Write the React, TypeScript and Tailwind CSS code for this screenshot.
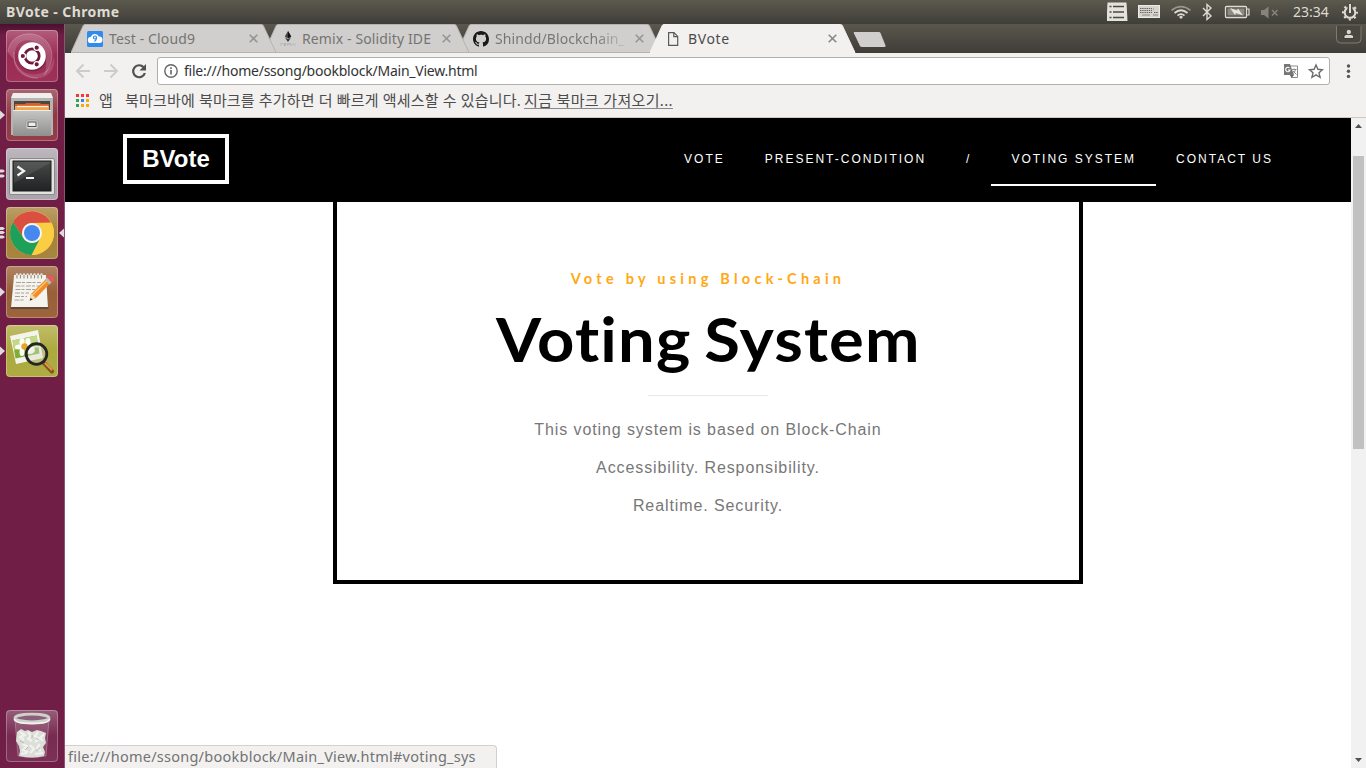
import React from "react";

const ui = "font-['Noto_Sans','Noto_Sans_CJK_KR',sans-serif]";

/* ---------- top panel ---------- */

function PanelIcons() {
  return (
    <svg width="259" height="24" viewBox="1107 0 259 24" className="block shrink-0">
      <path d="M1107.500 2.500h19l1 18.500h-21z" fill="#e4e2dc" />
      <path d="M1113 6.500h11M1113 12h11M1113 17.500h11" stroke="#4b4943" strokeWidth="1.600" />
      <path d="M1109.500 6.500h2M1109.500 12h2M1109.500 17.500h2" stroke="#4b4943" strokeWidth="1.600" />
      <rect x="1138.500" y="5.500" width="21" height="12" fill="#d5d3cd" stroke="#eceae5" />
      <path d="M1140 8.500h12M1140 10.500h12M1140 12.500h12M1154 12.500h4" stroke="#63615a" strokeDasharray="1.400 .8" />
      <path d="M1142 15h8M1153 9h1M1153 15h5" stroke="#8a887f" />
      <g fill="none" stroke="#dfdbd2" strokeWidth="1.700">
        <path d="M1171.500 10.300Q1181 3 1190.500 10.300" stroke="#99968d" />
        <path d="M1174.500 13Q1181 7.500 1187.500 13" />
        <path d="M1177.500 15.700Q1181 12.500 1184.500 15.700" />
      </g>
      <path d="M1179 17l2-1.500 2 1.500-2 2z" fill="#dfdbd2" />
      <path d="M1203 8l8 8-4 3.500v-15l4 3.500-8 8" fill="none" stroke="#dfdbd2" strokeWidth="1.400" />
      <rect x="1225.500" y="6.500" width="21" height="11" rx="1" fill="none" stroke="#dfdbd2" strokeWidth="1.300" />
      <rect x="1227.500" y="8.500" width="17" height="7" fill="#8d8a82" />
      <path d="M1247 9h2v6h-2" fill="none" stroke="#dfdbd2" strokeWidth="1.200" />
      <path d="M1230 8l7 2.500 1-2 5 7-7-2.500-1 2z" fill="#e6e3dc" />
      <path d="M1261 10h3l4.500-3.500v12l-4.500-3.500h-3z" fill="#86837a" />
      <path d="M1272 10l5.500 5.500M1277.500 10l-5.500 5.500" stroke="#86837a" strokeWidth="1.500" />
      <g stroke="#dfdbd2" fill="none">
        <circle cx="1350" cy="12.500" r="5.300" strokeWidth="2" />
        <circle cx="1350" cy="12.500" r="7" strokeWidth="2" strokeDasharray="2.200 3.298" strokeDashoffset="1" />
        <path d="M1350 3.500v9" stroke="#4b4943" strokeWidth="5" />
        <path d="M1350 4v9" strokeWidth="2" />
      </g>
    </svg>
  );
}

function TopPanel() {
  return (
    <div className={`flex h-6 w-full shrink-0 items-center overflow-hidden bg-linear-to-b from-[#5c594e] to-[#3f3e39] ${ui}`}>
      <span className="w-[240px] pl-[6px] text-[14px] leading-6 font-bold tracking-[0.4px] whitespace-nowrap text-[#dfdbd2]">BVote - Chrome</span>
      <div className="relative ml-auto h-6 w-[259px]">
        <PanelIcons />
        <span className="absolute top-0 left-[186px] text-[14px] leading-6 text-[#dfdbd2]">23:34</span>
      </div>
    </div>
  );
}

/* ---------- launcher ---------- */

function Tile({ color, marks = 0, active = false, children }: { color: string; marks?: number; active?: boolean; children: React.ReactNode }) {
  return (
    <div className="flex h-[52px] w-16 shrink-0 items-center">
      <svg width="64" height="52" viewBox="0 0 64 52" className="block">
        <rect x="6" width="52" height="52" rx="4" fill={color} />
        <rect x="6" width="52" height="52" rx="4" fill="url(#gloss)" />
        <rect x="6.500" y=".5" width="51" height="51" rx="3.500" fill="none" stroke="#fff" strokeOpacity=".28" />
        {marks === 1 && <path d="M0 21.500l5 4.500-5 4.500z" fill="#dedade" />}
        {marks === 2 && <path d="M0 21.500h3l2 1.500-2 1.500H0zM0 26.500h3l2 1.500-2 1.500H0z" fill="#dedade" />}
        {marks === 3 && <path d="M0 20h3l2 1.500-2 1.500H0zM0 24h3l2 1.500-2 1.500H0zM0 28.500h3l2 1.500-2 1.500H0z" fill="#dedade" />}
        {active && <path d="M64 21.500l-5 4.500 5 4.500z" fill="#dedade" />}
        {children}
      </svg>
    </div>
  );
}

function UbuntuMark() {
  return (
    <g>
      <path d="M8 22C9 7 27-1 41 7c14 8 14 26 3 38 5-13 1-28-9-33C24 7 13 12 15 30c-3-3-6-5-7-8z" fill="#fff" fillOpacity=".16" />
      <path d="M14 26c2 14 15 23 30 16 6-3 9-9 10-16 2 12-4 20-14 22-15 3-28-8-26-22z" fill="#fff" fillOpacity=".14" />
      <path d="M8 22C9 7 27-1 41 7c14 8 14 26 3 38M14 22c-2 14 9 26 24 26" fill="none" stroke="#fff" strokeOpacity=".22" />
      <circle cx="32.500" cy="27.300" r="14" fill="#000" fillOpacity=".25" />
      <circle cx="32" cy="26" r="13.800" fill="#fff" />
      <circle cx="32" cy="26" r="7.200" fill="none" stroke="#72183c" strokeWidth="2.800" />
      <g fill="#72183c" stroke="#fff" strokeWidth="1.200">
        <circle cx="22.800" cy="26" r="2.700" />
        <circle cx="36.700" cy="17.700" r="2.700" />
        <circle cx="36.700" cy="34.300" r="2.700" />
      </g>
    </g>
  );
}

function FilesIcon() {
  return (
    <g>
      <path d="M13 4h38l2 6v36H11V10z" fill="#b5b5b3" />
      <path d="M13 4h38l2 5H11z" fill="#efefed" />
      <path d="M14 12h36v10H14z" fill="#4a4744" />
      <path d="M15 15h10l1-1h14l1 1h8v7H15z" fill="#d95f29" />
      <path d="M15 17h34v5H15z" fill="#f3a54e" />
      <path d="M17 17.500h31" stroke="#fff3d9" strokeWidth="1.300" />
      <path d="M13 21h38v26H13z" fill="url(#steel)" />
      <path d="M13 21.500h38" stroke="#ededeb" />
      <rect x="26" y="31" width="12" height="9" rx="2" fill="#ddd" stroke="#a0a09e" />
      <rect x="28" y="33" width="8" height="4.500" fill="#eee" stroke="#4e4e4c" />
    </g>
  );
}

function TerminalIcon() {
  return (
    <g>
      <rect x="9.500" y="10.500" width="45" height="36" rx="1.500" fill="#e2e2df" stroke="#8b898b" />
      <rect x="13" y="13" width="38" height="30" fill="url(#screen)" stroke="#1d1f1f" />
      <path d="M14 14h36v1L14 35z" fill="#fff" fillOpacity=".09" />
      <path d="M17.500 18.500l6.500 4.500-6.500 4.500" fill="none" stroke="#f4f4f2" strokeWidth="2.200" />
      <path d="M26 30h8" stroke="#f4f4f2" strokeWidth="2" />
    </g>
  );
}

function ChromeIcon() {
  return (
    <g>
      <circle cx="32" cy="26" r="22" fill="#f7cb4d" />
      <path d="M13 15A22 22 0 0 1 51 15.500L32 16a10 10 0 0 0-8.600 15z" fill="#db4f41" />
      <path d="M32 16h19.500a22 22 0 0 1-20 32l9.400-17.500A10 10 0 0 0 32 16z" fill="#fbcd43" />
      <path d="M13 15A22 22 0 0 0 31.500 48L39.500 32.600A10 10 0 0 1 23.400 31z" fill="#1ca05a" />
      <circle cx="32" cy="26" r="10" fill="#f4f5f4" />
      <circle cx="32" cy="26" r="8" fill="#4688ee" />
    </g>
  );
}

function EditorIcon() {
  return (
    <g>
      <path d="M14 10h32l2.500 33h-38z" fill="#5d4a38" />
      <path d="M14 9h32l2 32H11z" fill="#f4f3ee" />
      <path d="M17 11V8.500M20.500 11V8.500M24 11V8.500M27.500 11V8.500M31 11V8.500M34.500 11V8.500M38 11V8.500M41.500 11V8.500" stroke="#e8e8e5" strokeWidth="2.400" strokeLinecap="round" />
      <path d="M17 12.500V9M20.500 12.500V9M24 12.500V9M27.500 12.500V9M31 12.500V9M34.500 12.500V9M38 12.500V9M41.500 12.500V9" stroke="#8c857d" strokeWidth=".9" />
      <path d="M16 16.500h25M15.500 20h24M15.500 23.500h20M15 27h14M15 30.500h12M14.500 34h10" stroke="#a6a29a" strokeDasharray="5 1 3 1.500" />
      <path d="M31 28L48 11l4 4.500L36 32l-6 2.500z" fill="#ef8d29" />
      <path d="M32 29.500L49 12.500" stroke="#ffc36b" strokeWidth="1.500" />
      <path d="M31 28l5 4-6 2.500z" fill="#f1d9ae" />
      <path d="M30.600 32l2 1.500-3 1.300z" fill="#222" />
      <path d="M45 13.500l2-2 4.500 5-2 2z" fill="#b7bcc0" />
      <path d="M47 11.500q3-4 6-.5t-1.500 5.500z" fill="#e45b59" />
    </g>
  );
}

function ViewerIcon() {
  return (
    <g>
      <path d="M10 11l28-6 5 28-27 6z" fill="#f3f4ec" />
      <path d="M12.500 15.500l24-5 3 18-24 5z" fill="#7cae39" />
      <path d="M12.500 15.500l24-5 1.500 8L14 25z" fill="#c3d888" />
      <g fill="#fffef7">
        <ellipse cx="22" cy="17" rx="2.500" ry="4" />
        <ellipse cx="28" cy="17" rx="2.500" ry="4" />
        <ellipse cx="19" cy="22" rx="4" ry="2.500" />
        <ellipse cx="22" cy="27" rx="2.500" ry="4" />
        <ellipse cx="30" cy="25" rx="5" ry="4" />
      </g>
      <circle cx="24.500" cy="21.500" r="3.200" fill="#e7a425" />
      <path d="M44 38l8 8.500" stroke="#8a541c" strokeWidth="4.200" strokeLinecap="round" />
      <path d="M45 38l7 7" stroke="#dc9c57" strokeWidth="1.800" />
      <circle cx="36.500" cy="29" r="10.300" fill="#d9dccb" fillOpacity=".42" stroke="#222724" strokeWidth="2.800" />
      <path d="M29 27q3-6 9-5" fill="none" stroke="#fff" strokeOpacity=".7" strokeWidth="1.500" />
    </g>
  );
}

function TrashIcon() {
  return (
    <g>
      <path d="M15 10h34l-3 36q-14 3-28 0z" fill="#fff" fillOpacity=".12" stroke="#fff" strokeOpacity=".25" />
      <path d="M17 22l4-3 4 2 3-1 4 2 5-2 4 1 5 2-1 5 1 5-3 4 2 5-1 4q-12 3-25 0l1-5-1-5-3-5z" fill="#dcded8" />
      <path d="M20 22l5 3-5 2 4 3M28 22l3 4-3 3 4 2M38 22l-3 4 4 3-4 3M44 24l-4 4 3 3M22 34l5 2-4 4 5 2M30 35l4 4-4 4M40 34l-3 4 4 3M21 44l6-1M35 44l8-1" fill="none" stroke="#f1f2ee" strokeWidth="2.200" strokeLinejoin="round" />
      <path d="M20 31l4 2M36 28l3 2M25 40l3-3M36 41l4-3M32 25v3" stroke="#b4b6b0" strokeWidth="1" />
      <ellipse cx="32" cy="8" rx="17" ry="3.800" fill="#8c6078" stroke="#cfd1cc" strokeWidth="2.800" />
      <path d="M14.500 9q0 4.500 17.500 4.500T49.500 9" fill="none" stroke="#f3f4f0" strokeWidth="1.800" />
    </g>
  );
}

function Launcher() {
  return (
    <aside className="flex w-[65px] shrink-0 flex-col justify-between border-r border-[#8d5478] bg-linear-to-b from-[#4a1030] via-[#701e45] via-[12px] to-[#701e45] pt-[6px] pb-[6px]">
      <svg width="0" height="0" className="absolute">
        <defs>
          <linearGradient id="gloss" x2="0" y2="1">
            <stop stopColor="#fff" stopOpacity=".25" />
            <stop offset=".5" stopColor="#fff" stopOpacity=".02" />
            <stop offset="1" stopColor="#fff" stopOpacity=".05" />
          </linearGradient>
          <linearGradient id="steel" x2="0" y2="1">
            <stop stopColor="#c6c6c4" />
            <stop offset="1" stopColor="#8f8f8d" />
          </linearGradient>
          <linearGradient id="screen" x2="0" y2="1">
            <stop stopColor="#464948" />
            <stop offset="1" stopColor="#202323" />
          </linearGradient>
        </defs>
      </svg>
      <div className="flex flex-col gap-[7px]">
        <Tile color="#99274f"><UbuntuMark /></Tile>
        <Tile color="#8f3441" marks={1}><FilesIcon /></Tile>
        <Tile color="#aaa0a9" marks={2}><TerminalIcon /></Tile>
        <Tile color="#a47f35" marks={3} active><ChromeIcon /></Tile>
        <Tile color="#985c33" marks={1}><EditorIcon /></Tile>
        <Tile color="#aaa739" marks={1}><ViewerIcon /></Tile>
      </div>
      <Tile color="#75264d"><TrashIcon /></Tile>
    </aside>
  );
}

/* ---------- browser tabs ---------- */

function CloudIcon() {
  return (
    <svg width="16" height="16" viewBox="0 0 16 16">
      <rect width="16" height="16" rx="1.500" fill="#2f8cec" />
      <path d="M4 12a3 3 0 0 1-.3-6A4.500 4.500 0 0 1 12 5.500 3.200 3.200 0 0 1 12.500 12z" fill="#fff" />
      <circle cx="8" cy="6.500" r="1.500" fill="none" stroke="#2f8cec" strokeWidth="1.200" />
      <path d="M9.500 6.500q0 2.500-2 4" fill="none" stroke="#2f8cec" strokeWidth="1.200" />
    </svg>
  );
}

function RemixIcon() {
  return (
    <svg width="16" height="16" viewBox="0 0 16 16">
      <path d="M8 0l3.200 5.500L8 7.500l-3.200-2z" fill="#444" />
      <path d="M8 0v7.500l3.200-2z" fill="#111" />
      <path d="M4.800 6.300L8 8.300l3.200-2L8 11z" fill="#333" />
      <path d="M1 14.500v-2h1.500M4 13.500h2M4 12.500h2v1M4 12.500v2h2M7.500 14.500v-2h3v2M9 12.500v2M12 12.500v2M13.500 12.500l2 2M15.500 12.500l-2 2" fill="none" stroke="#aaa" strokeWidth=".7" />
    </svg>
  );
}

function GithubIcon() {
  return (
    <svg width="16" height="16" viewBox="0 0 16 16">
      <path fill="#1b1918" d="M8 0C3.580 0 0 3.580 0 8c0 3.540 2.290 6.530 5.470 7.590.4.070.55-.17.55-.38 0-.19-.01-.82-.01-1.490-2.010.37-2.530-.49-2.690-.94-.09-.23-.48-.94-.82-1.130-.28-.15-.68-.52-.01-.53.63-.01 1.080.58 1.230.82.72 1.210 1.870.87 2.330.66.07-.52.28-.87.51-1.070-1.780-.2-3.640-.89-3.640-3.950 0-.87.31-1.590.82-2.150-.08-.2-.36-1.020.08-2.120 0 0 .67-.21 2.200.82.64-.18 1.320-.27 2-.27s1.360.09 2 .27c1.530-1.040 2.200-.82 2.200-.82.44 1.100.16 1.920.08 2.120.51.56.82 1.270.82 2.150 0 3.070-1.870 3.750-3.650 3.950.29.25.54.73.54 1.480 0 1.070-.01 1.930-.01 2.200 0 .21.15.46.55.38A8.010 8.010 0 0 0 16 8c0-4.420-3.580-8-8-8z" />
    </svg>
  );
}

function PageIcon() {
  return (
    <svg width="16" height="16" viewBox="0 0 16 16" fill="none" stroke="#5a5a5a" strokeWidth="1.200">
      <path d="M2.600 1.600h5.400l3.700 3.800v9H2.600zM7.800 1.600v4h4" />
    </svg>
  );
}

type TabProps = { icon: React.ReactNode; label: string; layer: string; text: string; active?: boolean };

function Tab({ icon, label, layer, text, active = false }: TabProps) {
  return (
    <div className={`relative flex h-[29px] w-[193px] shrink-0 items-center ${layer}`}>
      <svg width="206" height="29" viewBox="0 0 206 29" className="absolute top-0 left-0">
        <path d="M0 28.500L12 2q.6-1.500 2-1.500h176.500q1.500 0 2 1.500L205 28.500z" fill={active ? "#f2f1f0" : "#d0cfcd"} />
        <path d="M0 28.500L12 2q.6-1.500 2-1.500h176.500q1.500 0 2 1.500L205 28.500" fill="none" stroke={active ? "#f2f1f0" : "#b5b3b0"} strokeWidth="1" />
        <path d="M0 28.500h205" stroke={active ? "#f2f1f0" : "#b5b3b0"} />
      </svg>
      <div className="relative flex w-full items-center pl-[16px]">
        <span className="shrink-0">{icon}</span>
        <span className={`ml-[6px] w-[132px] shrink-0 text-[14px] leading-[28px] whitespace-nowrap ${text}`}>{label}</span>
        <svg width="9" height="9" viewBox="0 0 9 9" className="ml-[8px] shrink-0" stroke={active ? "#888" : "#969593"} strokeWidth="1.600">
          <path d="M.7.7l7.600 7.600M8.300.7L.7 8.300" />
        </svg>
      </div>
    </div>
  );
}

function TabStrip() {
  return (
    <div className="flex h-[29px] items-start overflow-hidden bg-linear-to-b from-[#5a574d] to-[#3f3d38] pl-[6px]">
      <Tab icon={<CloudIcon />} label="Test - Cloud9" layer="z-30" text="text-[#757472] tracking-[0.12px]" />
      <Tab icon={<RemixIcon />} label="Remix - Solidity IDE" layer="z-20" text="text-[#757472] tracking-[0.12px]" />
      <Tab icon={<GithubIcon />} label="Shindd/Blockchain_" layer="z-10" text="bg-linear-to-r from-[#757472] from-75% to-[#757472]/10 bg-clip-text text-transparent tracking-[0.1px]" />
      <Tab icon={<PageIcon />} label="BVote" layer="z-40" text="text-[#4c4c4c] tracking-[0.6px]" active />
      <svg width="34" height="29" viewBox="0 0 34 29" className="ml-[10px] shrink-0">
        <path d="M1 8h25q1 0 1.500 1L32.500 21.500q.3 1.500-1 1.500H9q-1.500 0-2-1L1 9.500q-.5-1.500 0-1.500z" fill="#d0cfcd" />
      </svg>
      <svg width="27" height="22" viewBox="0 0 27 22" className="mr-[4px] ml-auto shrink-0">
        <path d="M1.500 2v13q0 4 4 4h16.500q4 0 4-4V2" fill="#49473f" stroke="#7d7a70" />
        <path d="M9 14.500v-2q0-2 2.500-2h4.500q2.500 0 2.500 2v2z" fill="#d8d5cd" stroke="#2c2b27" strokeWidth=".8" />
        <circle cx="13.800" cy="8" r="2.700" fill="#d8d5cd" stroke="#2c2b27" strokeWidth=".8" />
      </svg>
    </div>
  );
}

/* ---------- toolbar and bookmarks ---------- */

function Toolbar() {
  return (
    <div className="flex h-[36px] items-center">
      <svg width="92" height="36" viewBox="65 53 92 36" className="shrink-0" fill="none">
        <path d="M90 71H77.500M83.500 64.500L77 71l6.500 6.500" stroke="#cdccca" strokeWidth="2" />
        <path d="M104 71h12.500M110.500 64.500L117 71l-6.500 6.500" stroke="#cdccca" strokeWidth="2" />
        <path d="M143.600 67.200A6 6 0 1 0 144.900 73" stroke="#505050" strokeWidth="2.200" />
        <path d="M146 64v6.500h-6.500z" fill="#505050" />
      </svg>
      <div className="flex h-7 w-[1173px] shrink-0 items-center rounded-[3px] border border-[#b0afad] bg-white">
        <svg width="14" height="14" viewBox="0 0 14 14" className="ml-[6px] shrink-0" fill="none" stroke="#666" strokeWidth="1.400">
          <circle cx="7" cy="7" r="6.200" />
          <path d="M7 6v4.500M7 3.300v1.600" strokeWidth="1.600" />
        </svg>
        <span className="ml-[6px] text-[14px] leading-[26px] tracking-[-0.23px] whitespace-nowrap text-[#333]">file:///home/ssong/bookblock/Main_View.html</span>
        <svg width="42" height="18" viewBox="1282 62 42 18" className="mr-[5px] ml-auto shrink-0">
          <path d="M1290 66h7.500v11.500h-6z" fill="#fff" stroke="#8b8b8b" />
          <path d="M1284 64h6l4 11h-10z" fill="#767676" />
          <path d="M1289.500 68a2.200 2.200 0 1 0 .5 2h-2" fill="none" stroke="#fff" strokeWidth="1.100" />
          <path d="M1291.500 69.500h5M1294 68.500v1M1292.500 74q2.500-1.500 3-4.500M1293 71l3.500 3.500" fill="none" stroke="#8b8b8b" />
          <path d="M1290 75l4 0-2.500 3z" fill="#666" />
          <path d="M1316 65l1.900 4.300 4.600.4-3.500 3.100 1.100 4.600-4.100-2.500-4.100 2.500 1.100-4.600-3.500-3.100 4.600-.4z" fill="none" stroke="#6b6b6b" strokeWidth="1.400" />
        </svg>
      </div>
      <svg width="36" height="20" viewBox="0 0 36 20" fill="#555" className="shrink-0">
        <circle cx="18.500" cy="5" r="1.700" />
        <circle cx="18.500" cy="10.200" r="1.700" />
        <circle cx="18.500" cy="15.400" r="1.700" />
      </svg>
    </div>
  );
}

const dots = ["bg-[#f43b33]", "bg-[#f43b33]", "bg-[#f43b33]", "bg-[#33a35a]", "bg-[#3b83ea]", "bg-[#f3ac0b]", "bg-[#33a35a]", "bg-[#f3ac0b]", "bg-[#f3ac0b]"];

function Bookmarks() {
  return (
    <div className="flex h-[29px] items-start border-b border-[#c9c8c6] text-[15px] leading-[23px] text-[#4c4c4c]">
      <div className="mt-[5px] ml-[11px] grid w-[13px] shrink-0 grid-cols-3 gap-[2px]">
        {dots.map((c, i) => (
          <i key={i} className={`h-[3px] w-[3px] ${c}`} />
        ))}
      </div>
      <span className="ml-[10px] w-[26px] shrink-0">앱</span>
      <span className="w-[399px] shrink-0 tracking-[0.17px] whitespace-nowrap">북마크바에 북마크를 추가하면 더 빠르게 액세스할 수 있습니다.</span>
      <a className="tracking-[0.35px] whitespace-nowrap underline decoration-[#8a8987] underline-offset-2">지금 북마크 가져오기...</a>
    </div>
  );
}

/* ---------- page ---------- */

function NavItem({ label, active = false }: { label: string; active?: boolean }) {
  return (
    <a className={`block h-[51px] border-b-2 px-5 pt-[10px] text-[12px] leading-[28px] tracking-[2px] whitespace-nowrap text-white ${active ? "border-white" : "border-transparent"}`}>{label}</a>
  );
}

function Page() {
  return (
    <main className="relative flex min-w-0 flex-1 flex-col bg-white font-['Liberation_Sans',Arial,sans-serif]">
      <header className="flex h-[84px] shrink-0 items-start justify-between bg-black pr-[58px] pl-[58px]">
        <div className="mt-4 flex h-[50px] w-[106px] items-center justify-center border-4 border-white text-[24px] font-bold text-white">BVote</div>
        <nav className="mt-[17px] flex">
          <NavItem label="VOTE" />
          <NavItem label="PRESENT-CONDITION" />
          <NavItem label="/" />
          <NavItem label="VOTING SYSTEM" active />
          <NavItem label="CONTACT US" />
        </nav>
      </header>
      <section className="mx-auto flex h-[382px] w-[750px] flex-col items-center border-4 border-t-0 border-black pt-[62px]">
        <p className="font-['Lato',sans-serif] text-[14.5px] leading-[30px] font-bold tracking-[4.250px] whitespace-nowrap text-[#ffa812]">Vote by using Block-Chain</p>
        <h1 className="mt-[4px] scale-x-105 font-['Lato',sans-serif] text-[62px] leading-[80px] font-bold tracking-[1.100px] whitespace-nowrap text-black [word-spacing:-4px]">Voting System</h1>
        <div className="mt-[17px] h-px w-[120px] bg-[#e8e8e8]" />
        <div className="mt-[15px] text-center text-[16px] leading-[38px] tracking-[0.9px] text-[#777]">
          <p>This voting system is based on Block-Chain</p>
          <p>Accessibility. Responsibility.</p>
          <p>Realtime. Security.</p>
        </div>
      </section>
      <div className={`absolute bottom-0 left-0 h-[23px] w-[432px] rounded-tr-[4px] border-t border-r border-[#d2d1cf] bg-[#f2f1f0] pl-[3px] text-[14.5px] leading-[21px] tracking-[0.250px] whitespace-nowrap text-[#737373] ${ui}`}>file:///home/ssong/bookblock/Main_View.html#voting_sys</div>
    </main>
  );
}

function Scrollbar() {
  return (
    <div className="flex w-[15px] shrink-0 flex-col items-center bg-[#f1f1f1]">
      <svg width="15" height="38" viewBox="0 0 15 38" className="shrink-0">
        <path d="M4 10h7L7.500 6z" fill="#505050" />
      </svg>
      <div className="h-[293px] w-[11px] bg-[#c1c1c1]" />
      <svg width="15" height="15" viewBox="0 0 15 15" className="mt-auto shrink-0">
        <path d="M4 5h7L7.500 9z" fill="#505050" />
      </svg>
    </div>
  );
}

export default function App() {
  return (
    <div className="flex h-[768px] w-[1366px] flex-col overflow-hidden bg-white">
      <TopPanel />
      <div className="flex min-h-0 flex-1">
        <Launcher />
        <div className="flex min-w-0 flex-1 flex-col">
          <div className={`shrink-0 bg-[#f2f1f0] ${ui}`}>
            <TabStrip />
            <Toolbar />
            <Bookmarks />
          </div>
          <div className="flex min-h-0 flex-1">
            <Page />
            <Scrollbar />
          </div>
        </div>
      </div>
    </div>
  );
}
